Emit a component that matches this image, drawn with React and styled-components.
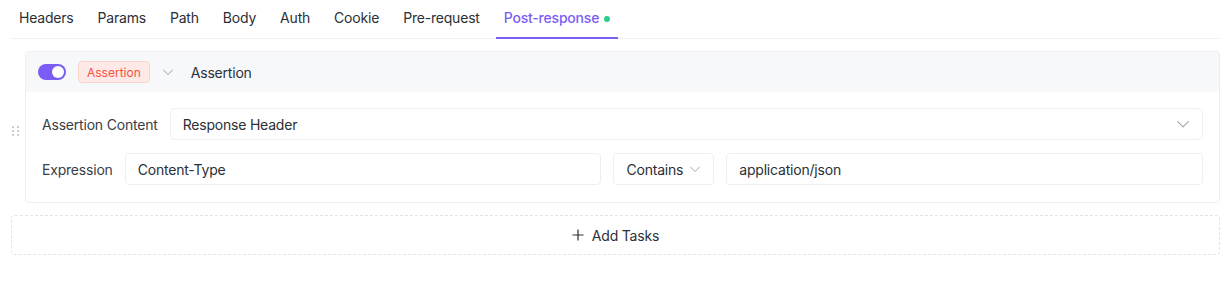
import React from 'react';
import styled, { createGlobalStyle } from 'styled-components';

const GlobalStyle = createGlobalStyle`
  body {
    margin: 0;
    background: #ffffff;
    font-family: Inter, 'Noto Sans', sans-serif;
    font-size: 14px;
    letter-spacing: -0.2px;
    color: #2b2f36;
  }
`;

const Page = styled.div`
  padding: 0 11px;
  width: 1209px;
`;

const TabBar = styled.div`
  display: flex;
  gap: 8px;
  height: 38px;
  border-bottom: 1px solid #eef0f3;
`;

const Tab = styled.div`
  position: relative;
  display: flex;
  align-items: center;
  gap: 5px;
  padding: 0 8px 2px;
  height: 38px;
  line-height: 1;
  box-sizing: border-box;
  color: ${(p) => (p.$active ? '#7b5cf5' : '#2b2f36')};
  font-weight: ${(p) => (p.$active ? 500 : 400)};

  &::after {
    content: '';
    display: ${(p) => (p.$active ? 'block' : 'none')};
    position: absolute;
    left: 0;
    right: 0;
    bottom: -1px;
    height: 2px;
    background: #7b5cf5;
  }
`;

const Dot = styled.span`
  width: 6px;
  height: 6px;
  border-radius: 50%;
  background: #2ecc8f;
  margin-top: 2px;
`;

const TaskArea = styled.div`
  display: flex;
  flex-direction: column;
  gap: 12px;
  padding-top: 12px;
`;

const CardWrap = styled.div`
  position: relative;
  margin-left: 14px;
`;

const DragHandle = styled.div`
  position: absolute;
  left: -13px;
  top: 75px;
  display: grid;
  grid-template-columns: repeat(2, 2px);
  gap: 2px 3px;

  span {
    width: 2px;
    height: 2px;
    border-radius: 1px;
    background: #b8bcc4;
  }
`;

const Card = styled.div`
  border: 1px solid #eceef1;
  border-radius: 4px;
  overflow: hidden;
`;

const CardHeader = styled.div`
  display: flex;
  align-items: center;
  height: 40px;
  padding: 0 12px;
  background: #f7f8fa;
`;

const Toggle = styled.div`
  width: 28px;
  height: 16px;
  border-radius: 8px;
  background: #7b5cf5;
  position: relative;

  &::after {
    content: '';
    position: absolute;
    right: 2px;
    top: 2px;
    width: 12px;
    height: 12px;
    border-radius: 50%;
    background: #ffffff;
  }
`;

const Badge = styled.span`
  margin-left: 12px;
  height: 22px;
  padding: 0 8px;
  display: inline-flex;
  align-items: center;
  box-sizing: border-box;
  border: 1px solid #fbd3cc;
  border-radius: 4px;
  background: #fee9e6;
  color: #f5533d;
  font-size: 12px;
  letter-spacing: 0;
`;

const Chevron = ({ size = 12, color = '#9aa0a9' }) => (
  <svg width={size} height={size} viewBox="0 0 12 12" fill="none">
    <path d="M1.5 4 L6 8.5 L10.5 4" stroke={color} strokeWidth="1" strokeLinecap="round" strokeLinejoin="round" />
  </svg>
);

const HeaderChevron = styled.span`
  display: inline-flex;
  margin-left: 12px;
`;

const HeaderTitle = styled.span`
  margin-left: 17px;
  color: #2b2f36;
`;

const CardBody = styled.div`
  display: flex;
  flex-direction: column;
  gap: 13px;
  padding: 16px 16px 17px;
`;

const Row = styled.div`
  display: flex;
  align-items: center;
  gap: 12px;
`;

const Label = styled.span`
  color: #3a3e45;
  white-space: nowrap;
`;

const Field = styled.div`
  flex: ${(p) => (p.$width ? `0 0 ${p.$width}px` : '1 1 0')};
  display: flex;
  align-items: center;
  justify-content: space-between;
  height: 32px;
  box-sizing: border-box;
  padding: 0 12px;
  border: 1px solid #eceef1;
  border-radius: 4px;
  background: #ffffff;
  color: #2b2f36;
`;

const FieldChevron = styled.span`
  display: inline-flex;
  margin-left: 6px;
`;

const AddTasks = styled.div`
  display: flex;
  align-items: center;
  justify-content: center;
  gap: 8px;
  height: 40px;
  box-sizing: border-box;
  border: 1px dashed #e2e4e8;
  border-radius: 4px;
  color: #2b2f36;
`;

const tabs = ['Headers', 'Params', 'Path', 'Body', 'Auth', 'Cookie', 'Pre-request', 'Post-response'];

const App = () => {
  return (
    <Page>
      <GlobalStyle />
      <TabBar>
        {tabs.map((t) => (
          <Tab key={t} $active={t === 'Post-response'}>
            {t}
            {t === 'Post-response' && <Dot />}
          </Tab>
        ))}
      </TabBar>
      <TaskArea>
        <CardWrap>
          <DragHandle>
            {Array.from({ length: 6 }).map((_, i) => (
              <span key={i} />
            ))}
          </DragHandle>
          <Card>
            <CardHeader>
              <Toggle />
              <Badge>Assertion</Badge>
              <HeaderChevron>
                <Chevron size={12} />
              </HeaderChevron>
              <HeaderTitle>Assertion</HeaderTitle>
            </CardHeader>
            <CardBody>
              <Row>
                <Label>Assertion Content</Label>
                <Field>
                  Response Header
                  <Chevron size={14} color="#a3a8b0" />
                </Field>
              </Row>
              <Row>
                <Label>Expression</Label>
                <Field>Content-Type</Field>
                <Field $width={98}>
                  Contains
                  <FieldChevron>
                    <Chevron size={12} color="#a3a8b0" />
                  </FieldChevron>
                </Field>
                <Field>application/json</Field>
              </Row>
            </CardBody>
          </Card>
        </CardWrap>
        <AddTasks>
          <svg width="12" height="12" viewBox="0 0 12 12" fill="none">
            <path d="M6 0.5 V11.5 M0.5 6 H11.5" stroke="#2b2f36" strokeWidth="1.2" />
          </svg>
          Add Tasks
        </AddTasks>
      </TaskArea>
    </Page>
  );
};

export default App;
